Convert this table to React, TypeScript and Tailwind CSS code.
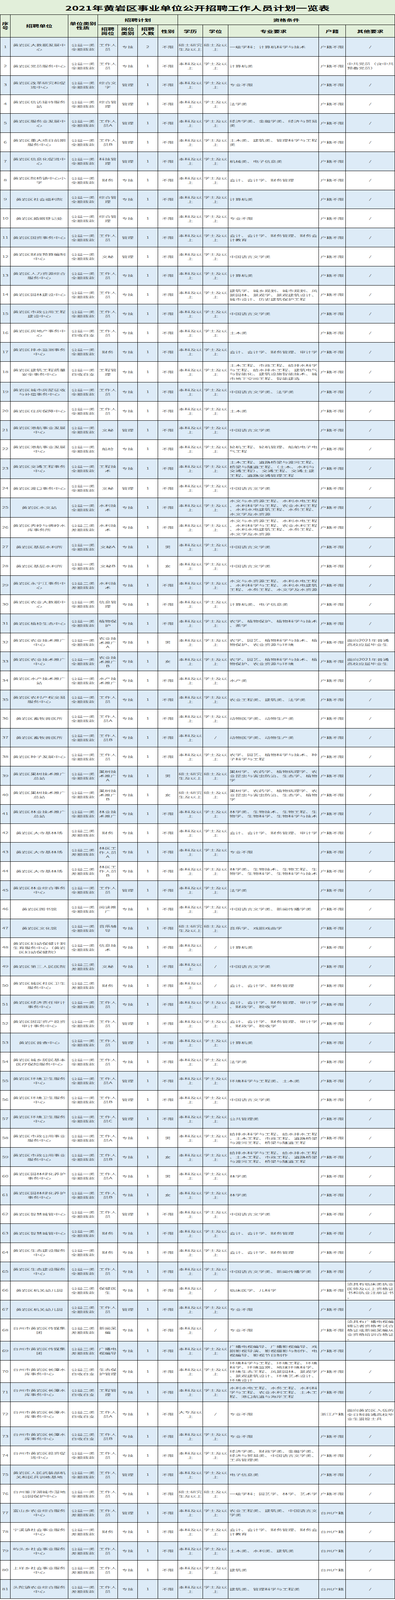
import React from "react";

type Row = [string, string, string, string, string, string, string, string, string, string, string, string];

const QY = "公益一类全额拨款";
const EC = "公益二类差额拨款";
const EZ = "公益二类自收自支";
const YC = "公益一类差额拨款";
const BK = "本科及以上";
const XS = "学士及以上";
const SS = "硕士研究生及以上";
const SD = "硕士及以上";
const HB = "户籍不限";
const TZ = "台州户籍";
const SW = "水文与水资源工程、水利水电工程、水利科学与工程、农业水利工程、水利水电建筑工程、水务工程、水文学及水资源";
const GPS = "给排水科学与工程、给水排水工程、土木工程、市政工程、道路桥梁与渡河工程、桥梁与隧道工程";
const LX = "林学类、生物技术、生物工程、生物学、生物科学、生物科学与技术";
const SJ = "会计、会计学、财务管理、审计学、财政学、税收学";

const rows: Row[] = [
  ["1", "黄岩区大数据发展中心", QY, "工作人员", "专技", "2", "不限", SS, SD, "一级学科：计算机科学与技术", HB, "/"],
  ["2", "黄岩区党员服务中心", QY, "工作人员", "专技", "1", "不限", BK, XS, "计算机类", HB, "中共党员（含中共|预备党员）"],
  ["3", "黄岩区改革研究和促进中心", QY, "综合文字", "管理", "1", "不限", BK, XS, "专业不限", HB, "/"],
  ["4", "黄岩区信访接待服务站", QY, "综合管理", "管理", "1", "不限", BK, XS, "法学类", HB, "/"],
  ["5", "黄岩区服务业发展中心", QY, "工作人员A", "管理", "1", "不限", BK, XS, "经济学类、金融学类、经济与贸易类", HB, "/"],
  ["6", "黄岩区重大项目前期服务中心", QY, "工作人员B", "管理", "1", "不限", BK, XS, "土木类、建筑类、管理科学与工程类", HB, "/"],
  ["7", "黄岩区信息化促进中心", QY, "科技管理", "管理", "1", "不限", BK, XS, "机械类、电子信息类", HB, "/"],
  ["8", "黄岩区院桥镇中心小学", QY, "财务", "专技", "1", "不限", BK, XS, "会计、会计学、财务管理", HB, "/"],
  ["9", "黄岩区社会福利院", QY, "综合管理", "专技", "1", "不限", BK, XS, "计算机类", HB, "/"],
  ["10", "黄岩区婚姻登记处", QY, "综合管理", "专技", "1", "不限", BK, XS, "专业不限", HB, "/"],
  ["11", "黄岩区国资事务中心", QY, "工作人员", "管理", "1", "不限", BK, XS, "会计、会计学、财务管理、财务会计教育", HB, "/"],
  ["12", "黄岩区财政预算编制中心", QY, "文秘", "管理", "1", "不限", BK, XS, "中国语言文学类", HB, "/"],
  ["13", "黄岩区人力资源综合服务中心", QY, "工作人员", "专技", "1", "不限", BK, XS, "计算机类", HB, "/"],
  ["14", "黄岩区园林建设中心", QY, "工作人员", "专技", "1", "不限", BK, XS, "建筑学、城乡规划、城市规划、风景园林、景观学、景观建筑设计、城市设计、历史建筑保护工程", HB, "/"],
  ["15", "黄岩区市政公用工程建设中心", QY, "工作人员", "专技", "1", "不限", BK, XS, "中国语言文学类", HB, "/"],
  ["16", "黄岩区房地产事务中心", "公益一类自收自支", "工作人员", "专技", "1", "不限", BK, XS, "土木类", HB, "/"],
  ["17", "黄岩区排水监测事务中心", QY, "财务", "专技", "1", "不限", BK, XS, "会计、会计学、财务管理、审计学", HB, "/"],
  ["18", "黄岩区建筑工程质量安全事务中心", "公益一类自收自支", "工程管理", "专技", "1", "不限", BK, XS, "土木工程、市政工程、给排水科学与工程、给水排水工程、建筑电气与智能化、建筑设施智能技术、城市地下空间工程、智能建造", HB, "/"],
  ["19", "黄岩区城市房屋征收与补偿事务中心", QY, "工作人员", "专技", "1", "不限", BK, XS, "中国语言文学类、法学类", HB, "/"],
  ["20", "黄岩区住房保障中心", QY, "工作人员", "专技", "1", "不限", BK, XS, "土木类", HB, "/"],
  ["21", "黄岩区港航事业发展中心", QY, "文秘", "管理", "1", "不限", BK, XS, "中国语言文学类", HB, "/"],
  ["22", "黄岩区港航事业发展中心", QY, "船检", "专技", "1", "不限", BK, XS, "轮机工程、轮机管理、船舶电子电气工程", HB, "/"],
  ["23", "黄岩区交通工程事务中心", QY, "工程技术", "专技", "1", "不限", BK, XS, "土木工程、道路桥梁与渡河工程、桥梁与隧道工程、（土木、水利与交通工程）、交通工程、交通土建工程、道路交通管理工程", HB, "/"],
  ["24", "黄岩区渡口事务中心", QY, "文秘", "管理", "1", "不限", BK, XS, "中国语言文学类", HB, "/"],
  ["25", "黄岩区水文站", QY, "水利技术", "专技", "1", "不限", BK, XS, SW, HB, "/"],
  ["26", "黄岩区秀岭与佛岭水库事务所", EC, "水利技术", "专技", "1", "不限", BK, XS, SW, HB, "/"],
  ["27", "黄岩区基层水利所", QY, "文秘A", "专技", "1", "男", BK, XS, "中国语言文学类", HB, "/"],
  ["28", "黄岩区基层水利所", QY, "文秘B", "专技", "1", "女", BK, XS, "中国语言文学类", HB, "/"],
  ["29", "黄岩区永宁江事务中心", EC, "水利技术", "专技", "1", "不限", BK, XS, "水文与水资源工程、水利水电工程、水利科学与工程、水利水电建筑工程、水务工程、水文学及水资源", HB, "/"],
  ["30", "黄岩区农业大数据中心", QY, "信息管理", "专技", "1", "不限", BK, XS, "计算机类、电子信息类", HB, "/"],
  ["31", "黄岩区植检生态中心", QY, "植物保护", "专技", "1", "不限", BK, XS, "农学、植物保护、植物科学与技术、茶学", HB, "/"],
  ["32", "黄岩区农业技术推广中心", QY, "农业技术推广A", "专技", "1", "男", BK, XS, "农学、园艺、植物科学与技术、植物保护、农业资源与环境", HB, "面向2021年普通|高校应届毕业生"],
  ["33", "黄岩区农业技术推广中心", QY, "农业技术推广B", "专技", "1", "女", BK, XS, "农学、园艺、植物科学与技术、植物保护、农业资源与环境", HB, "面向2021年普通|高校应届毕业生"],
  ["34", "黄岩区水产技术推广站", QY, "水产技术推广", "专技", "1", "不限", BK, XS, "水产类", HB, "/"],
  ["35", "黄岩区农村产权交易服务中心", QY, "工作人员", "专技", "1", "不限", BK, XS, "农业工程类、建筑类、法学类", HB, "/"],
  ["36", "黄岩区畜牧兽医所", QY, "工作人员A", "专技", "1", "不限", BK, XS, "动物医学类、动物生产类", HB, "/"],
  ["37", "黄岩区畜牧兽医所", QY, "工作人员B", "专技", "1", "不限", BK, "/", "动物医学类、动物生产类", HB, "/"],
  ["38", "黄岩区种子发展中心", QY, "工作人员", "专技", "1", "不限", BK, XS, "农学、园艺、植物科学与技术、种子科学与工程", HB, "/"],
  ["39", "黄岩区果树技术推广总站", QY, "果树技术推广A", "专技", "1", "男", SS, SD, "果树学、农药学、植物病理学、农业昆虫与害虫防治、生态学、植物学", HB, "/"],
  ["40", "黄岩区果树技术推广总站", QY, "果树技术推广B", "专技", "1", "女", SS, SD, "果树学、农药学、植物病理学、农业昆虫与害虫防治、生态学、植物学", HB, "/"],
  ["41", "黄岩区林业技术推广总站", QY, "林业技术推广", "专技", "1", "不限", BK, XS, LX, HB, "/"],
  ["42", "黄岩区大寺基林场", EC, "财务", "专技", "1", "不限", BK, XS, "会计、会计学、财务管理、审计学", HB, "/"],
  ["43", "黄岩区大寺基林场", EC, "林区工作人员A", "专技", "1", "不限", BK, XS, "专业不限", HB, "/"],
  ["44", "黄岩区大寺基林场", EC, "林区工作人员B", "专技", "1", "不限", BK, XS, LX, HB, "/"],
  ["45", "黄岩区林业综合事务中心", QY, "工作人员", "管理", "1", "不限", BK, XS, "法学类", HB, "/"],
  ["46", "黄岩区图书馆", QY, "阅读推广", "专技", "1", "不限", BK, XS, "中国语言文学类、新闻传播学类", HB, "/"],
  ["47", "黄岩区文化馆", QY, "音乐辅导", "专技", "1", "不限", SS, SD, "音乐学、戏剧戏曲学", HB, "/"],
  ["48", "黄岩区妇幼保健计划生育服务中心（黄岩区妇幼保健院）", QY, "信息技术", "专技", "1", "不限", BK, "/", "计算机类", HB, "/"],
  ["49", "黄岩区第三人民医院", EC, "文秘", "专技", "1", "不限", BK, "/", "中国语言文学类", HB, "/"],
  ["50", "黄岩区城区社区卫生服务中心", EC, "财务", "专技", "1", "不限", BK, "/", "会计、会计学、财务管理", HB, "/"],
  ["51", "黄岩区经济责任审计事务中心", QY, "工作人员", "专技", "1", "不限", BK, XS, SJ, HB, "/"],
  ["52", "黄岩区固定资产投资审计事务中心", QY, "工作人员", "管理", "1", "不限", BK, XS, SJ, HB, "/"],
  ["53", "黄岩区普查中心", QY, "工作人员", "管理", "1", "不限", BK, XS, "计算机类", HB, "/"],
  ["54", "黄岩区城乡居民基本医疗保险服务中心", QY, "工作人员", "专技", "1", "不限", BK, XS, "法学类", HB, "/"],
  ["55", "黄岩区环境卫生服务中心", QY, "工作人员A", "管理", "1", "不限", BK, XS, "环境科学与工程类、土木类", HB, "/"],
  ["56", "黄岩区环境卫生服务中心", QY, "工作人员B", "管理", "1", "不限", BK, XS, "中国语言文学类", HB, "/"],
  ["57", "黄岩区环境卫生服务中心", QY, "工作人员C", "管理", "1", "不限", BK, XS, "公共管理类", HB, "/"],
  ["58", "黄岩区市政公用事业服务中心", QY, "工作人员A", "专技", "1", "男", BK, XS, GPS, HB, "/"],
  ["59", "黄岩区市政公用事业服务中心", QY, "工作人员B", "专技", "1", "女", BK, XS, GPS, HB, "/"],
  ["60", "黄岩区园林绿化养护事务中心", QY, "工作人员A", "专技", "1", "男", BK, XS, "林学类", HB, "/"],
  ["61", "黄岩区园林绿化养护事务中心", QY, "工作人员B", "专技", "1", "女", BK, XS, "林学类", HB, "/"],
  ["62", "黄岩区智慧城管中心", QY, "工作人员", "管理", "1", "不限", BK, XS, "中国语言文学类", HB, "/"],
  ["63", "黄岩区智慧城管中心", QY, "财务", "专技", "1", "不限", BK, XS, "会计、会计学、财务管理", HB, "/"],
  ["64", "黄岩区生态建设服务中心", QY, "财务", "专技", "1", "不限", BK, XS, "会计、会计学、财务管理", HB, "/"],
  ["65", "黄岩区生态建设服务中心", QY, "工作人员", "专技", "1", "不限", BK, XS, "中国语言文学类、新闻传播学类", HB, "/"],
  ["66", "黄岩区机关幼儿园", "公益二类全额拨款", "保健医生", "专技", "1", "不限", BK, "/", "临床医学、儿科学", HB, "须具有临床类执业医师及以上资格证书和执业注册证书。"],
  ["67", "黄岩区机关幼儿园", "公益二类全额拨款", "工作人员", "管理", "1", "不限", BK, XS, "专业不限", HB, "/"],
  ["68", "台州市黄岩区传媒集团", EC, "新闻采编", "专技", "1", "不限", BK, "/", "专业不限", HB, "须具有广播电视编辑记者资格考试合格证或新闻采编从业资格培训合格证。"],
  ["69", "台州市黄岩区传媒集团", EC, "广播电视编导", "专技", "1", "不限", BK, XS, "广播电视编导、广播影视编导、戏剧影视导演、影视摄影与制作、电视编导、影视节目制作", HB, "/"],
  ["70", "台州市黄岩区长潭水库事务中心", EZ, "生态保护管理", "专技", "1", "不限", BK, XS, "环境科学与工程、环境工程、环境科学、环境监察、地球环境科学、环境生态工程、风景园林、景观学、景观建筑设计、环境艺术设计、环境设计", HB, "/"],
  ["71", "台州市黄岩区长潭水库事务中心", EZ, "工程管理", "专技", "1", "不限", BK, XS, "水利水电工程、水务工程、水利科学与工程、农业水利工程、土木工程、港口航道与海岸工程", HB, "/"],
  ["72", "台州市黄岩区长潭水库事务中心", EZ, "工作人员A", "专技", "1", "不限", "大专及以上", "/", "专业不限", "浙江户籍", "面向黄岩区入伍的全日制普通高校毕业生退役士兵"],
  ["73", "台州市黄岩区长潭水库事务中心", EZ, "工作人员B", "专技", "1", "不限", BK, XS, "专业不限", HB, "/"],
  ["74", "台州市黄岩区投资促进中心", QY, "工作人员", "专技", "1", "不限", BK, XS, "经济学类、财政学类、金融学类、经济与贸易类、中国语言文学类、工商管理类", HB, "/"],
  ["75", "黄岩区人民武装部机关和民兵训练基地", QY, "工作人员", "管理", "1", "不限", BK, XS, "电子信息类", HB, "/"],
  ["76", "台州鉴洋湖城市湿地公园保护中心", QY, "工作人员", "专技", "1", "不限", SS, SD, "一级学科：园艺学、林学、艺术学", HB, "/"],
  ["77", "富山乡农业综合服务中心", YC, "工作人员", "管理", "1", "不限", BK, XS, "农业工程类、建筑类、中国语言文学类", TZ, "/"],
  ["78", "宁溪镇社会事业服务中心", YC, "财务", "专技", "1", "不限", BK, XS, "会计、会计学、财务管理、财务会计教育", TZ, "/"],
  ["79", "屿头乡社会事业服务中心", YC, "工作人员", "专技", "1", "不限", BK, XS, "土木类、水利类、建筑类", TZ, "/"],
  ["80", "上垟乡社会事业服务中心", YC, "工作人员", "专技", "1", "不限", BK, XS, "建筑类", TZ, "/"],
  ["81", "头陀镇农业综合服务中心", YC, "工作人员", "专技", "1", "不限", BK, XS, "建筑类、管理科学与工程类", TZ, "/"],
];

const heightClass: Record<string, string> = {
  "18": "h-[53.7px]",
  "23": "h-[51.3px]",
  "25": "h-[50.1px]",
  "26": "h-[51.9px]",
  "68": "h-[56.8px]",
  "70": "h-[57.4px]",
  "72": "h-[64.1px]",
  "75": "h-[49.4px]",
};

// capacity per column in half-width units
const caps = [4, 18, 8, 6, 6, 6, 6, 8, 8, 30, 8, 16];

function wrap(text: string, cap: number): string[] {
  if (text.includes("|")) return text.split("|");
  const lines: string[] = [];
  let cur = "";
  let w = 0;
  for (const ch of Array.from(text)) {
    const cw = ch.charCodeAt(0) < 0x2000 ? 1 : 2;
    if (w + cw > cap && cur) {
      lines.push(cur);
      cur = "";
      w = 0;
    }
    cur += ch;
    w += cw;
  }
  if (cur) lines.push(cur);
  return lines;
}

const COLS =
  "grid grid-cols-[26px_148px_76px_51px_51px_52px_51px_64px_65px_232px_69px_126px]";

function Cell({ text, col }: { text: string; col: number }) {
  const left = (col === 9 || col === 11) && text !== "/";
  const lines = wrap(text, caps[col]);
  return (
    <div
      className={
        left
          ? "flex min-h-0 items-center justify-start border-r border-b border-black pl-[3px]"
          : "flex min-h-0 items-center justify-center border-r border-b border-black"
      }
    >
      <div
        className={
          left
            ? "scale-y-[0.49] text-left leading-[22.5px] whitespace-nowrap"
            : "scale-y-[0.49] text-center leading-[22.5px] whitespace-nowrap"
        }
      >
        {lines.map((l, i) => (
          <div key={i}>{l}</div>
        ))}
      </div>
    </div>
  );
}

function H({ lines, className }: { lines: string[]; className: string }) {
  return (
    <div className={"flex min-h-0 items-center justify-center border-r border-b border-black " + className}>
      <div className="scale-y-[0.52] text-center leading-[22px] whitespace-nowrap">
        {lines.map((l, i) => (
          <div key={i}>{l}</div>
        ))}
      </div>
    </div>
  );
}

export default function App() {
  return (
    <div className="w-[1012px] bg-white text-black font-['Noto_Sans_CJK_SC','Noto_Sans',sans-serif]">
      <div className="flex h-[36.6px] items-center justify-center bg-[#e2efda] pt-[4px]">
        <div className="scale-y-[0.53] text-[29px] font-bold leading-[34px]">
          2021年黄岩区事业单位公开招聘工作人员计划一览表
        </div>
      </div>
      <div className="border-l border-t border-black">
        <div className={COLS + " grid-rows-[26.9px_31.7px] bg-[#e2efda] text-[17px] font-bold"}>
          <H lines={["序", "号"]} className="row-span-2" />
          <H lines={["招聘单位"]} className="row-span-2" />
          <H lines={["单位类别", "性质"]} className="row-span-2" />
          <H lines={["招聘计划"]} className="col-span-4" />
          <H lines={["资格条件"]} className="col-span-5" />
          <H lines={["招聘", "岗位"]} className="" />
          <H lines={["岗位", "类别"]} className="" />
          <H lines={["招聘", "人数"]} className="" />
          <H lines={["性别"]} className="" />
          <H lines={["学历"]} className="" />
          <H lines={["学位"]} className="" />
          <H lines={["专业要求"]} className="" />
          <H lines={["户籍"]} className="" />
          <H lines={["其他要求"]} className="" />
        </div>
        {rows.map((r, idx) => (
          <div
            key={r[0]}
            className={
              COLS +
              " grid-rows-1 font-light text-[15px] " +
              (heightClass[r[0]] ?? "h-[48.8px]") +
              (idx % 2 === 0 ? " bg-[#ddebf7]" : " bg-white")
            }
          >
            {r.map((t, c) => (
              <Cell key={c} text={t} col={c} />
            ))}
          </div>
        ))}
      </div>
    </div>
  );
}
